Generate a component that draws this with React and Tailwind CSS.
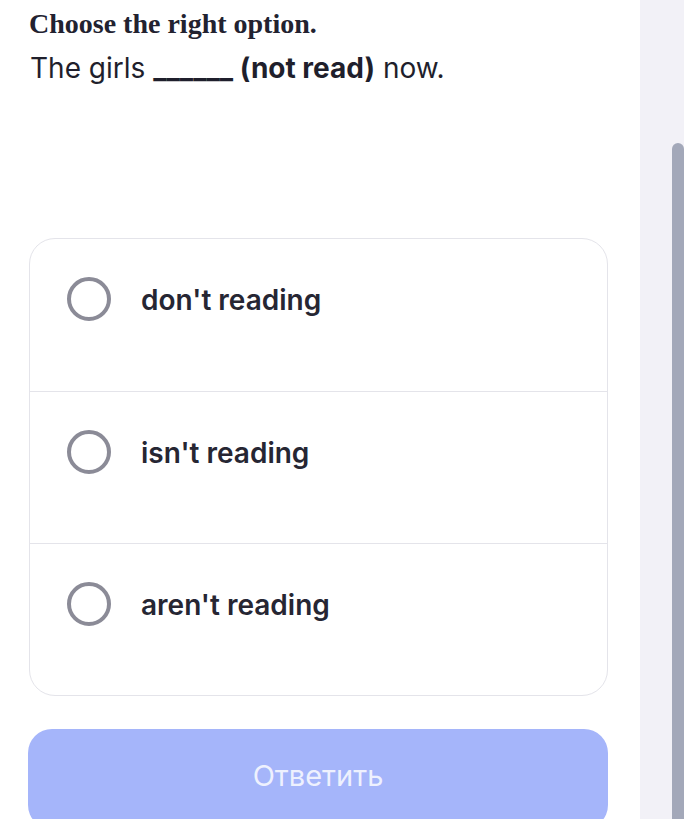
export default function App() {
  const options = ["don't reading", "isn't reading", "aren't reading"];
  return (
    <div className="flex w-[684px] h-[819px] overflow-hidden bg-white">
      <main className="w-[640px] shrink-0 bg-white pl-[29px] pr-[32px]">
        <h1
          className="pt-[8px] text-[28px] leading-[32px] font-bold text-[#222230]"
          style={{ fontFamily: '"Liberation Serif", serif' }}
        >
          Choose the right option.
        </h1>
        <p
          className="mt-[11px] pl-[1px] text-[28px] leading-[34px] text-[#1f1f2c]"
          style={{ fontFamily: 'Inter, sans-serif' }}
        >
          The girls <span className="font-bold">______ (not read)</span> now.
        </p>

        <div
          className="mt-[153px] w-[579px] rounded-[26px] border border-[#e4e4ea] bg-white"
          style={{ fontFamily: 'Inter, sans-serif' }}
        >
          {options.map((o, i) => (
            <label
              key={o}
              className={`flex h-[152px] items-start gap-[30px] pl-[37px] pt-[38px] ${
                i > 0 ? "border-t border-[#e4e4ea]" : ""
              }`}
            >
              <span className="h-[44px] w-[44px] shrink-0 rounded-full border-[4px] border-[#8b8b97]" />
              <span className="pt-[3px] text-[28px] leading-[40px] font-semibold text-[#262633]">
                {o}
              </span>
            </label>
          ))}
        </div>

        <button
          className="mt-[33px] flex h-[100px] w-[580px] -ml-[1px] items-start justify-center rounded-[24px] bg-[#a5b5fa] pt-[28px] text-[29px] leading-[38px] text-[#eef1fe]"
          style={{ fontFamily: 'Inter, sans-serif' }}
        >
          Ответить
        </button>
      </main>
      <aside className="relative flex-1 bg-[#f2f1f7]">
        <div className="absolute right-0 top-[143px] h-[700px] w-[12px] rounded-t-full bg-[#a3a8b9]" />
      </aside>
    </div>
  );
}
